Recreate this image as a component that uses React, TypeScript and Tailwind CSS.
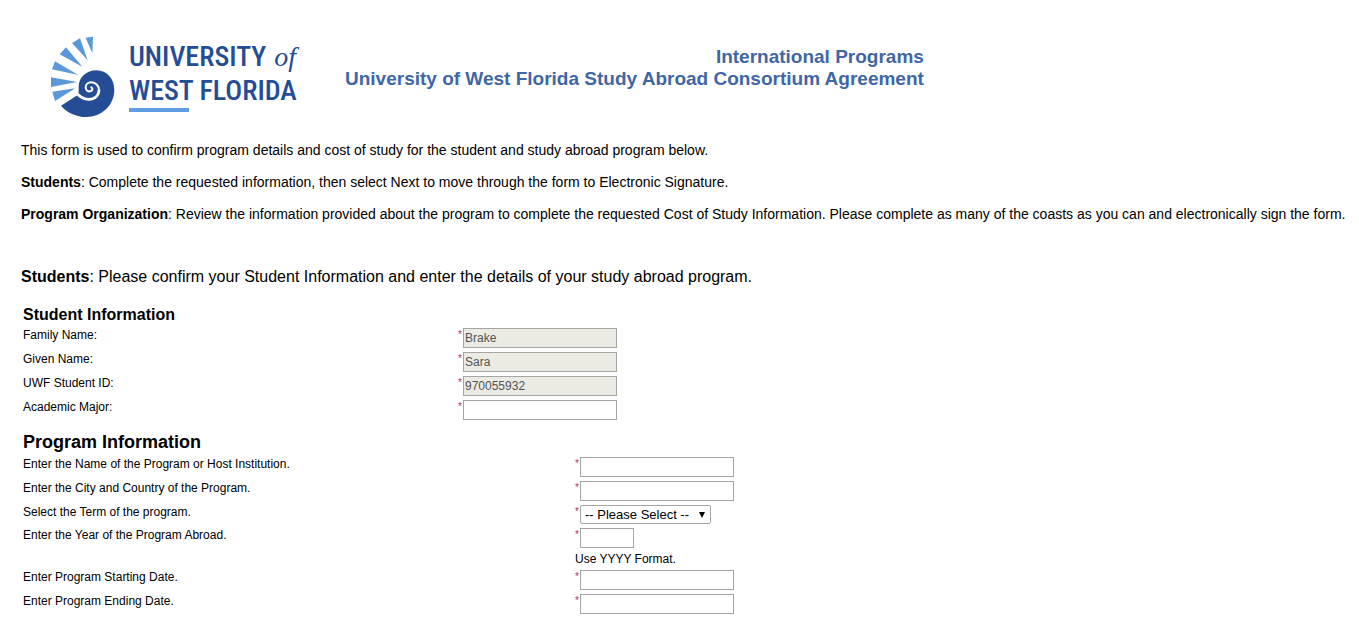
import type { ReactNode } from 'react'
import clsx from 'clsx'

function ShellMark() {
  return (
    <svg viewBox="0 0 198 246" className="h-[82px] w-[66px] shrink-0" aria-hidden="true">
      <g fill="#5b98db">
        <path d="M104 5 126 2 124 52Z" />
        <path d="M63 21 87 7 110 73Z" />
        <path d="M26 55 45 34 94 92Z" />
        <path d="M3 100 12 76 82 117Z" />
        <path d="M0 124 78 138 0 153Z" />
        <path d="M4 167 73 157 12 195Z" />
      </g>
      <path
        fill="#254d95"
        d="M30 209 79 178C84 172 83 164 83 152C83 124 107 103 136 103C168 103 190 129 190 162C190 207 152 243 106 243C76 243 48 230 30 209Z"
      />
      <g fill="none" stroke="#fff" strokeLinecap="round">
        <path strokeWidth="8" d="M75 169C87 184 98 190 113 190C132 190 144 178 144 162" />
        <path strokeWidth="6" d="M144 164C145 150 134 139 121 139C111 139 104 146 104 154C104 162 110 167 117 166C124 165 127 157 121 154" />
      </g>
    </svg>
  )
}

function Logo() {
  return (
    <div className="flex gap-3 text-[#254d95]">
      <ShellMark />
      <div className="w-[172px] pt-1 font-['Roboto_Condensed','Liberation_Sans_Narrow',sans-serif] text-[28px] leading-[34px] font-medium whitespace-nowrap">
        <div className="flex gap-2">
          <span>UNIVERSITY</span>
          <span className="font-['Liberation_Serif',serif] font-normal italic">of</span>
        </div>
        <div>WEST FLORIDA</div>
        <div className="h-1 w-[60px] bg-[#5f9ee3]" />
      </div>
    </div>
  )
}

interface FieldProps {
  id: string
  label: string
  wide?: boolean
  hint?: string
  children: ReactNode
}

function Field({ id, label, wide, hint, children }: FieldProps) {
  return (
    <div className={clsx('grid', wide ? 'grid-cols-[552px_1fr]' : 'grid-cols-[435px_1fr]')}>
      <label htmlFor={id} className="leading-[14px]">
        {label}
      </label>
      <div>
        <div className="flex items-start">
          <span className="w-[5px] text-[10px] leading-[14px] text-[#b0306a]">*</span>
          {children}
        </div>
        {hint && <p className="pt-1 leading-[14px]">{hint}</p>}
      </div>
    </div>
  )
}

interface TextInputProps {
  id: string
  value?: string
  short?: boolean
}

function TextInput({ id, value, short }: TextInputProps) {
  return (
    <input
      id={id}
      type="text"
      defaultValue={value}
      disabled={value !== undefined}
      className={clsx(
        'h-5 border border-[#a5a5a5] bg-white px-px text-[#545454] disabled:bg-[#ebebe4]',
        short ? 'w-[54px]' : 'w-[154px]',
      )}
    />
  )
}

export default function App() {
  return (
    <main className="bg-white pt-9 pl-[21px] font-['Liberation_Sans',Arial,sans-serif] text-black">
      <header className="flex gap-11 pl-[30px]">
        <Logo />
        <h1 className="pt-[10px] text-right text-[19px] leading-[22px] font-bold text-[#3f67a7]">
          International Programs
          <br />
          University of West Florida Study Abroad Consortium Agreement
        </h1>
      </header>

      <section className="mt-6 flex flex-col gap-4 text-sm leading-4">
        <p>This form is used to confirm program details and cost of study for the student and study abroad program below.</p>
        <p>
          <b>Students</b>: Complete the requested information, then select Next to move through the form to Electronic
          Signature.
        </p>
        <p>
          <b>Program Organization</b>: Review the information provided about the program to complete the requested Cost
          of Study Information. Please complete as many of the coasts as you can and electronically sign the form.
        </p>
      </section>

      <p className="mt-[45px] text-base leading-5">
        <b>Students</b>: Please confirm your Student Information and enter the details of your study abroad program.
      </p>

      <form className="pl-[2px] text-xs">
        <h2 className="mt-[18px] text-base leading-5 font-bold">Student Information</h2>
        <div className="mt-[3px] flex flex-col gap-1">
          <Field id="family" label="Family Name:">
            <TextInput id="family" value="Brake" />
          </Field>
          <Field id="given" label="Given Name:">
            <TextInput id="given" value="Sara" />
          </Field>
          <Field id="student-id" label="UWF Student ID:">
            <TextInput id="student-id" value="970055932" />
          </Field>
          <Field id="major" label="Academic Major:">
            <TextInput id="major" />
          </Field>
        </div>

        <h2 className="mt-3 text-lg leading-5 font-bold">Program Information</h2>
        <div className="mt-[5px] flex flex-col gap-1">
          <Field id="program" label="Enter the Name of the Program or Host Institution." wide>
            <TextInput id="program" />
          </Field>
          <Field id="city" label="Enter the City and Country of the Program." wide>
            <TextInput id="city" />
          </Field>
          <Field id="term" label="Select the Term of the program." wide>
            <div className="grid items-center">
              <select
                id="term"
                className="col-start-1 row-start-1 h-[19px] w-[131px] appearance-none rounded-xs border border-[#a5a5a5] bg-white pl-1 text-[13px]"
              >
                <option>-- Please Select --</option>
              </select>
              <svg viewBox="0 0 6 6" className="pointer-events-none col-start-1 row-start-1 mr-[6px] size-[6px] justify-self-end" aria-hidden="true">
                <path d="M0 0h6L3 6Z" />
              </svg>
            </div>
          </Field>
          <Field id="year" label="Enter the Year of the Program Abroad." hint="Use YYYY Format." wide>
            <TextInput id="year" short />
          </Field>
          <Field id="start" label="Enter Program Starting Date." wide>
            <TextInput id="start" />
          </Field>
          <Field id="end" label="Enter Program Ending Date." wide>
            <TextInput id="end" />
          </Field>
        </div>
      </form>
    </main>
  )
}
